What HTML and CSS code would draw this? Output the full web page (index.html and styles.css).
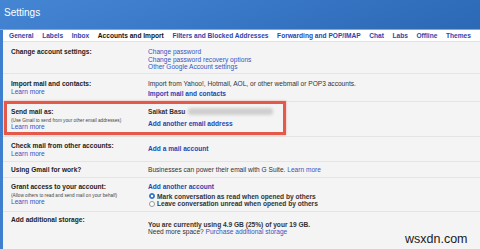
FILE: index.html
```html
<!DOCTYPE html>
<html lang="en">
<head>
  <meta charset="UTF-8" />
  <title>Settings</title>
  <link rel="stylesheet" href="styles.css">
</head>
<body>
  <header class="topbar">
    <h1>Settings</h1>
  </header>
  <div class="main">
    <nav class="tabs">
      <a href="#">General</a>
      <a href="#">Labels</a>
      <a href="#">Inbox</a>
      <a href="#" class="current">Accounts and Import</a>
      <a href="#">Filters and Blocked Addresses</a>
      <a href="#">Forwarding and POP/IMAP</a>
      <a href="#">Chat</a>
      <a href="#">Labs</a>
      <a href="#">Offline</a>
      <a href="#">Themes</a>
    </nav>

    <div class="row r1">
      <div class="label"><b>Change account settings:</b></div>
      <div class="value">
        <a href="#">Change password</a><br>
        <a href="#">Change password recovery options</a><br>
        <a href="#">Other Google Account settings</a>
      </div>
    </div>

    <div class="row r2">
      <div class="label"><b>Import mail and contacts:</b><br><a href="#">Learn more</a></div>
      <div class="value">
        <div>Import from Yahoo!, Hotmail, AOL, or other webmail or POP3 accounts.</div>
        <a href="#" class="strong gap">Import mail and contacts</a>
      </div>
    </div>

    <div class="row r3">
      <div class="label">
        <b>Send mail as:</b>
        <div class="note">(Use Gmail to send from your other email addresses)</div>
        <a href="#">Learn more</a>
      </div>
      <div class="value">
        <div><b>Saikat Basu</b><span class="blur"></span></div>
        <a href="#" class="strong add-addr">Add another email address</a>
      </div>
      <div class="highlight"></div>
    </div>

    <div class="row r4">
      <div class="label"><b>Check mail from other accounts:</b><br><a href="#">Learn more</a></div>
      <div class="value"><a href="#" class="strong">Add a mail account</a></div>
    </div>

    <div class="row r5">
      <div class="label"><b>Using Gmail for work?</b></div>
      <div class="value">Businesses can power their email with G Suite. <a href="#">Learn more</a></div>
    </div>

    <div class="row r6">
      <div class="label">
        <b>Grant access to your account:</b>
        <div class="note">(Allow others to read and send mail on your behalf)</div>
        <a href="#">Learn more</a>
      </div>
      <div class="value">
        <a href="#" class="strong">Add another account</a>
        <div class="options">
          <label><span class="radio on"></span>Mark conversation as read when opened by others</label>
          <label><span class="radio"></span>Leave conversation unread when opened by others</label>
        </div>
      </div>
    </div>

    <div class="row r7">
      <div class="label"><b>Add additional storage:</b></div>
      <div class="value">
        <b>You are currently using 4.9 GB (25%) of your 19 GB.</b><br>
        Need more space? <a href="#">Purchase additional storage</a>
      </div>
    </div>
  </div>

  <div class="watermark">wsxdn.com</div>
</body>
</html>
```

FILE: styles.css
```css
* { box-sizing: border-box; }
body { margin: 0; background: #3f7fcf; font-family: 'Liberation Sans', Arial, sans-serif; font-size: 6.6px; color: #222; overflow: hidden; }
a { color: #3157c4; text-decoration: none; }
a.strong { font-weight: bold; color: #2447b4; }

.topbar { height: 30px; padding: 8px 0 0 4px; background: linear-gradient(160deg, #4586d4, #2b68b6); border-bottom: 1px solid #79aae2; }
.topbar h1 { margin: 0; font-size: 10px; line-height: 10px; font-weight: normal; color: #fff; }

.main { margin-left: 3px; background: #f4f4f4; min-height: 230px; }

.tabs { display: flex; gap: 8.6px; height: 12px; padding-left: 6px; line-height: 11px; background: #fff; border-bottom: 1px solid #e2e2e2; }
.tabs a { font-weight: bold; color: #2b45ad; }
.tabs a.current { color: #111; }

.row { position: relative; display: grid; grid-template-columns: 137px 1fr; padding-left: 8px; line-height: 7.5px; border-bottom: 1px solid #e4e4e4; }
.value { color: #333; }
.note { font-size: 4.7px; line-height: 5px; margin-top: 2px; color: #444; }

.r1 { padding-top: 6px; padding-bottom: 2.5px; }
.r2 { padding-top: 6px; padding-bottom: 3.5px; }
.r2 .gap { display: inline-block; margin-top: 2.5px; }
.r3 { padding-top: 6px; padding-bottom: 6px; }
.r3 .add-addr { display: inline-block; margin-top: 4px; }
.r4 { padding-top: 5px; padding-bottom: 4px; }
.r4 .value { padding-top: 2.5px; }
.r5 { padding-top: 3.5px; padding-bottom: 4px; }
.r6 { padding-top: 5px; padding-bottom: 3.75px; }
.r7 { padding-top: 3.25px; padding-bottom: 10px; border-bottom: none; }
.r7 .value { padding-top: 5px; }

.blur { display: inline-block; width: 85px; height: 7px; margin-left: 3px; vertical-align: -1px; background: #cfcfcf; border-radius: 3px; filter: blur(1.5px); }
.highlight { position: absolute; left: 1px; top: -1px; width: 282px; height: 34px; border: 3px solid #e4594a; box-shadow: 0 0 2px rgba(228,89,74,0.5); }

.options { margin-top: 2.2px; }
.options label { display: flex; align-items: center; gap: 2px; font-weight: bold; color: #333; }
.radio { width: 6px; height: 6px; border-radius: 50%; border: 0.5px solid #999; background: #fff; margin-left: 1px; }
.radio.on { border-color: #2a6ac4; background: radial-gradient(circle, #fff 0 1px, #3b82d8 1.3px); }

.watermark { position: absolute; left: 405px; top: 232.7px; font-size: 12.5px; line-height: 12.5px; color: #1a1a1a; }
```
